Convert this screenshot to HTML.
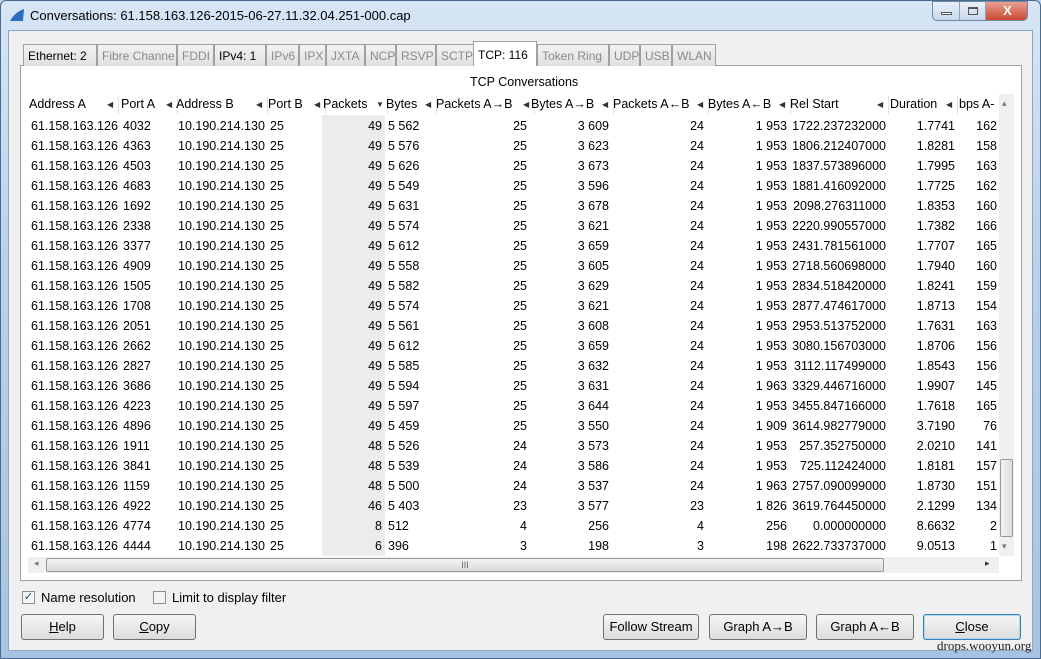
<!DOCTYPE html><html><head><style>
*{margin:0;padding:0;box-sizing:border-box}
body{width:1041px;height:659px;overflow:hidden;font-family:"Liberation Sans",sans-serif;font-size:12.5px;color:#000;background:#bcd3ec;position:relative}
.frame{position:absolute;left:0;top:0;width:1041px;height:659px;background:linear-gradient(#d7e6f6,#b9d1ec 40%,#a8c3e2);border:1px solid #4a6a8e;border-radius:6px 6px 0 0}
.title{position:absolute;left:30px;top:8px;font-size:13px;color:#000}
.client{position:absolute;left:8px;top:30px;width:1025px;height:621px;background:#f0f0f0;border:1px solid #8ea6c2}
.a{position:absolute;white-space:nowrap}
.tab{position:absolute;top:44px;height:22px;border:1px solid #a0a0a0;border-bottom:none;background:linear-gradient(#f2f2f2,#e0e0e0);color:#8a8a8a;padding:4px 0 0 4px;font-size:12px;white-space:nowrap;overflow:hidden}
.tab.b{color:#000}
.panel{position:absolute;left:20px;top:65px;width:1002px;height:516px;background:#fff;border:1px solid #a0a0a0}
.hdr{position:absolute;top:97px;height:20px;font-size:12.5px}
.btn{position:absolute;top:614px;height:26px;border:1px solid #707070;border-radius:3px;background:linear-gradient(#f6f6f6,#dcdcdc);text-align:center;line-height:24px;font-size:13px}
.sep{position:absolute;top:96px;width:1px;height:18px;background:#e0e0e0}
</style></head><body>
<div class="frame"></div>
<svg class="a" style="left:9px;top:8px" width="16" height="14"><path d="M1 13 Q6 4 15 1 L14 13 Z" fill="#2a6fc0"/></svg>
<div class="title">Conversations: 61.158.163.126-2015-06-27.11.32.04.251-000.cap</div>
<div class="a" style="left:932px;top:1px;width:96px;height:20px;border:1px solid #6f86a6;border-radius:0 0 5px 5px;background:linear-gradient(#e8f0fa,#c8d8ec);overflow:hidden">
<div class="a" style="left:0;top:0;width:27px;height:19px;border-right:1px solid #8aa0bc"><div class="a" style="left:8px;top:10px;width:11px;height:3px;border:1px solid #555;background:#fff"></div></div>
<div class="a" style="left:27px;top:0;width:26px;height:19px;border-right:1px solid #8aa0bc"><div class="a" style="left:8px;top:5px;width:10px;height:8px;border:1px solid #555;border-top-width:2px"></div></div>
<div class="a" style="left:53px;top:0;width:43px;height:19px;background:linear-gradient(#e8a090,#c8442c);color:#fff;text-align:center;font-weight:bold;font-size:13px;line-height:18px">X</div>
</div>
<div class="client"></div>
<div class="panel"></div>
<div class="tab b" style="left:23px;width:74px">Ethernet: 2</div>
<div class="tab" style="left:97px;width:80px">Fibre Channe</div>
<div class="tab" style="left:177px;width:37px">FDDI</div>
<div class="tab b" style="left:214px;width:52px">IPv4: 1</div>
<div class="tab" style="left:266px;width:33px">IPv6</div>
<div class="tab" style="left:299px;width:27px">IPX</div>
<div class="tab" style="left:326px;width:39px">JXTA</div>
<div class="tab" style="left:365px;width:31px">NCP</div>
<div class="tab" style="left:396px;width:40px">RSVP</div>
<div class="tab" style="left:436px;width:38px">SCTP</div>
<div class="tab b" style="left:473px;top:41px;height:25px;width:64px;background:#fff;padding-top:6px;z-index:2">TCP: 116</div>
<div class="tab" style="left:537px;width:72px">Token Ring</div>
<div class="tab" style="left:609px;width:31px">UDP</div>
<div class="tab" style="left:640px;width:32px">USB</div>
<div class="tab" style="left:672px;width:44px">WLAN</div>
<div class="a" style="left:470px;top:75px">TCP Conversations</div>
<div class="a" style="left:322px;top:115px;width:63px;height:441px;background:#ececec"></div>
<div id="hd"></div>
<div id="rows"></div>
<div class="a" style="left:999px;top:94px;width:15px;height:462px;background:#f0f0f0"></div>
<div class="a" style="left:1002px;top:98px;font-size:9px;color:#777">▴</div>
<div class="a" style="left:1002px;top:541px;font-size:9px;color:#777">▾</div>
<div class="a" style="left:1000px;top:459px;width:13px;height:78px;border:1px solid #999;border-radius:2px;background:linear-gradient(90deg,#f4f4f4,#dcdcdc)"></div>
<div class="a" style="left:28px;top:557px;width:971px;height:16px;background:#f0f0f0"></div>
<div class="a" style="left:34px;top:558px;font-size:9px;color:#777">◂</div>
<div class="a" style="left:985px;top:558px;font-size:9px;color:#333">▸</div>
<div class="a" style="left:46px;top:558px;width:838px;height:14px;border:1px solid #999;border-radius:2px;background:linear-gradient(#f4f4f4,#dadada);text-align:center;font-size:9px;line-height:12px;color:#666">III</div>
<div class="a" style="left:22px;top:591px;width:13px;height:13px;border:1px solid #8e8f8f;background:#f4f4f4;font-size:11px;line-height:11px;text-align:center;color:#24418c">✓</div>
<div class="a" style="left:41px;top:590px;font-size:13px">Name resolution</div>
<div class="a" style="left:153px;top:591px;width:13px;height:13px;border:1px solid #8e8f8f;background:#f4f4f4"></div>
<div class="a" style="left:172px;top:590px;font-size:13px">Limit to display filter</div>
<div class="btn" style="left:21px;width:83px"><u>H</u>elp</div>
<div class="btn" style="left:113px;width:83px"><u>C</u>opy</div>
<div class="btn" style="left:603px;width:96px">Follow Stream</div>
<div class="btn" style="left:709px;width:98px">Graph A→B</div>
<div class="btn" style="left:816px;width:98px">Graph A←B</div>
<div class="btn" style="left:923px;width:98px;border-color:#3c7fb1;box-shadow:inset 0 0 0 1px #a8d8f4"><u>C</u>lose</div>
<div class="a" style="left:937px;top:638px;font-family:'Liberation Serif',serif;font-size:13px;color:#222">drops.wooyun.org</div>
<script>
var H=[["Address A",29,110],["Port A",121,169],["Address B",176,259],["Port B",268,317],["Packets",323,379],["Bytes",386,428],["Packets A→B",436,526],["Bytes A→B",531,605],["Packets A←B",613,700],["Bytes A←B",708,782],["Rel Start",790,880],["Duration",890,949],["bps A-",959,999]];
var h="";H.forEach(function(c,i){h+='<div class="a hdr" style="left:'+c[1]+'px">'+c[0]+'</div>';h+='<div class="a hdr" style="left:'+(c[2]-3)+'px;font-size:8px;top:100px;color:#333">'+(i==4?'▼':(i==12?'':'◀'))+'</div>';h+='<div class="sep" style="left:'+(c[2]+8)+'px"></div>'});
document.getElementById('hd').innerHTML=h;
var D=[["4032","5 562",25,"3 609",24,"1 953","1722.237232000","1.7741","162",49],["4363","5 576",25,"3 623",24,"1 953","1806.212407000","1.8281","158",49],["4503","5 626",25,"3 673",24,"1 953","1837.573896000","1.7995","163",49],["4683","5 549",25,"3 596",24,"1 953","1881.416092000","1.7725","162",49],["1692","5 631",25,"3 678",24,"1 953","2098.276311000","1.8353","160",49],["2338","5 574",25,"3 621",24,"1 953","2220.990557000","1.7382","166",49],["3377","5 612",25,"3 659",24,"1 953","2431.781561000","1.7707","165",49],["4909","5 558",25,"3 605",24,"1 953","2718.560698000","1.7940","160",49],["1505","5 582",25,"3 629",24,"1 953","2834.518420000","1.8241","159",49],["1708","5 574",25,"3 621",24,"1 953","2877.474617000","1.8713","154",49],["2051","5 561",25,"3 608",24,"1 953","2953.513752000","1.7631","163",49],["2662","5 612",25,"3 659",24,"1 953","3080.156703000","1.8706","156",49],["2827","5 585",25,"3 632",24,"1 953","3112.117499000","1.8543","156",49],["3686","5 594",25,"3 631",24,"1 963","3329.446716000","1.9907","145",49],["4223","5 597",25,"3 644",24,"1 953","3455.847166000","1.7618","165",49],["4896","5 459",25,"3 550",24,"1 909","3614.982779000","3.7190","76",49],["1911","5 526",24,"3 573",24,"1 953","257.352750000","2.0210","141",48],["3841","5 539",24,"3 586",24,"1 953","725.112424000","1.8181","157",48],["1159","5 500",24,"3 537",24,"1 963","2757.090099000","1.8730","151",48],["4922","5 403",23,"3 577",23,"1 826","3619.764450000","2.1299","134",46],["4774","512",4,"256",4,"256","0.000000000","8.6632","2",8],["4444","396",3,"198",3,"198","2622.733737000","9.0513","1",6]];
var s="";D.forEach(function(d,i){var t=119+i*20;function c(x,v,r,w){s+='<div class="a" style="top:'+t+'px;'+(r?'left:'+(x-w)+'px;width:'+w+'px;text-align:right':'left:'+x+'px')+'">'+v+'</div>'}
c(31,"61.158.163.126");c(123,d[0]);c(178,"10.190.214.130");c(270,"25");c(382,d[9],1,50);c(388,d[1]);c(527,d[2],1,60);c(609,d[3],1,60);c(704,d[4],1,60);c(787,d[5],1,60);c(886,d[6],1,100);c(955,d[7],1,60);c(997,d[8],1,40)});
document.getElementById('rows').innerHTML=s;
</script>
</body></html>
